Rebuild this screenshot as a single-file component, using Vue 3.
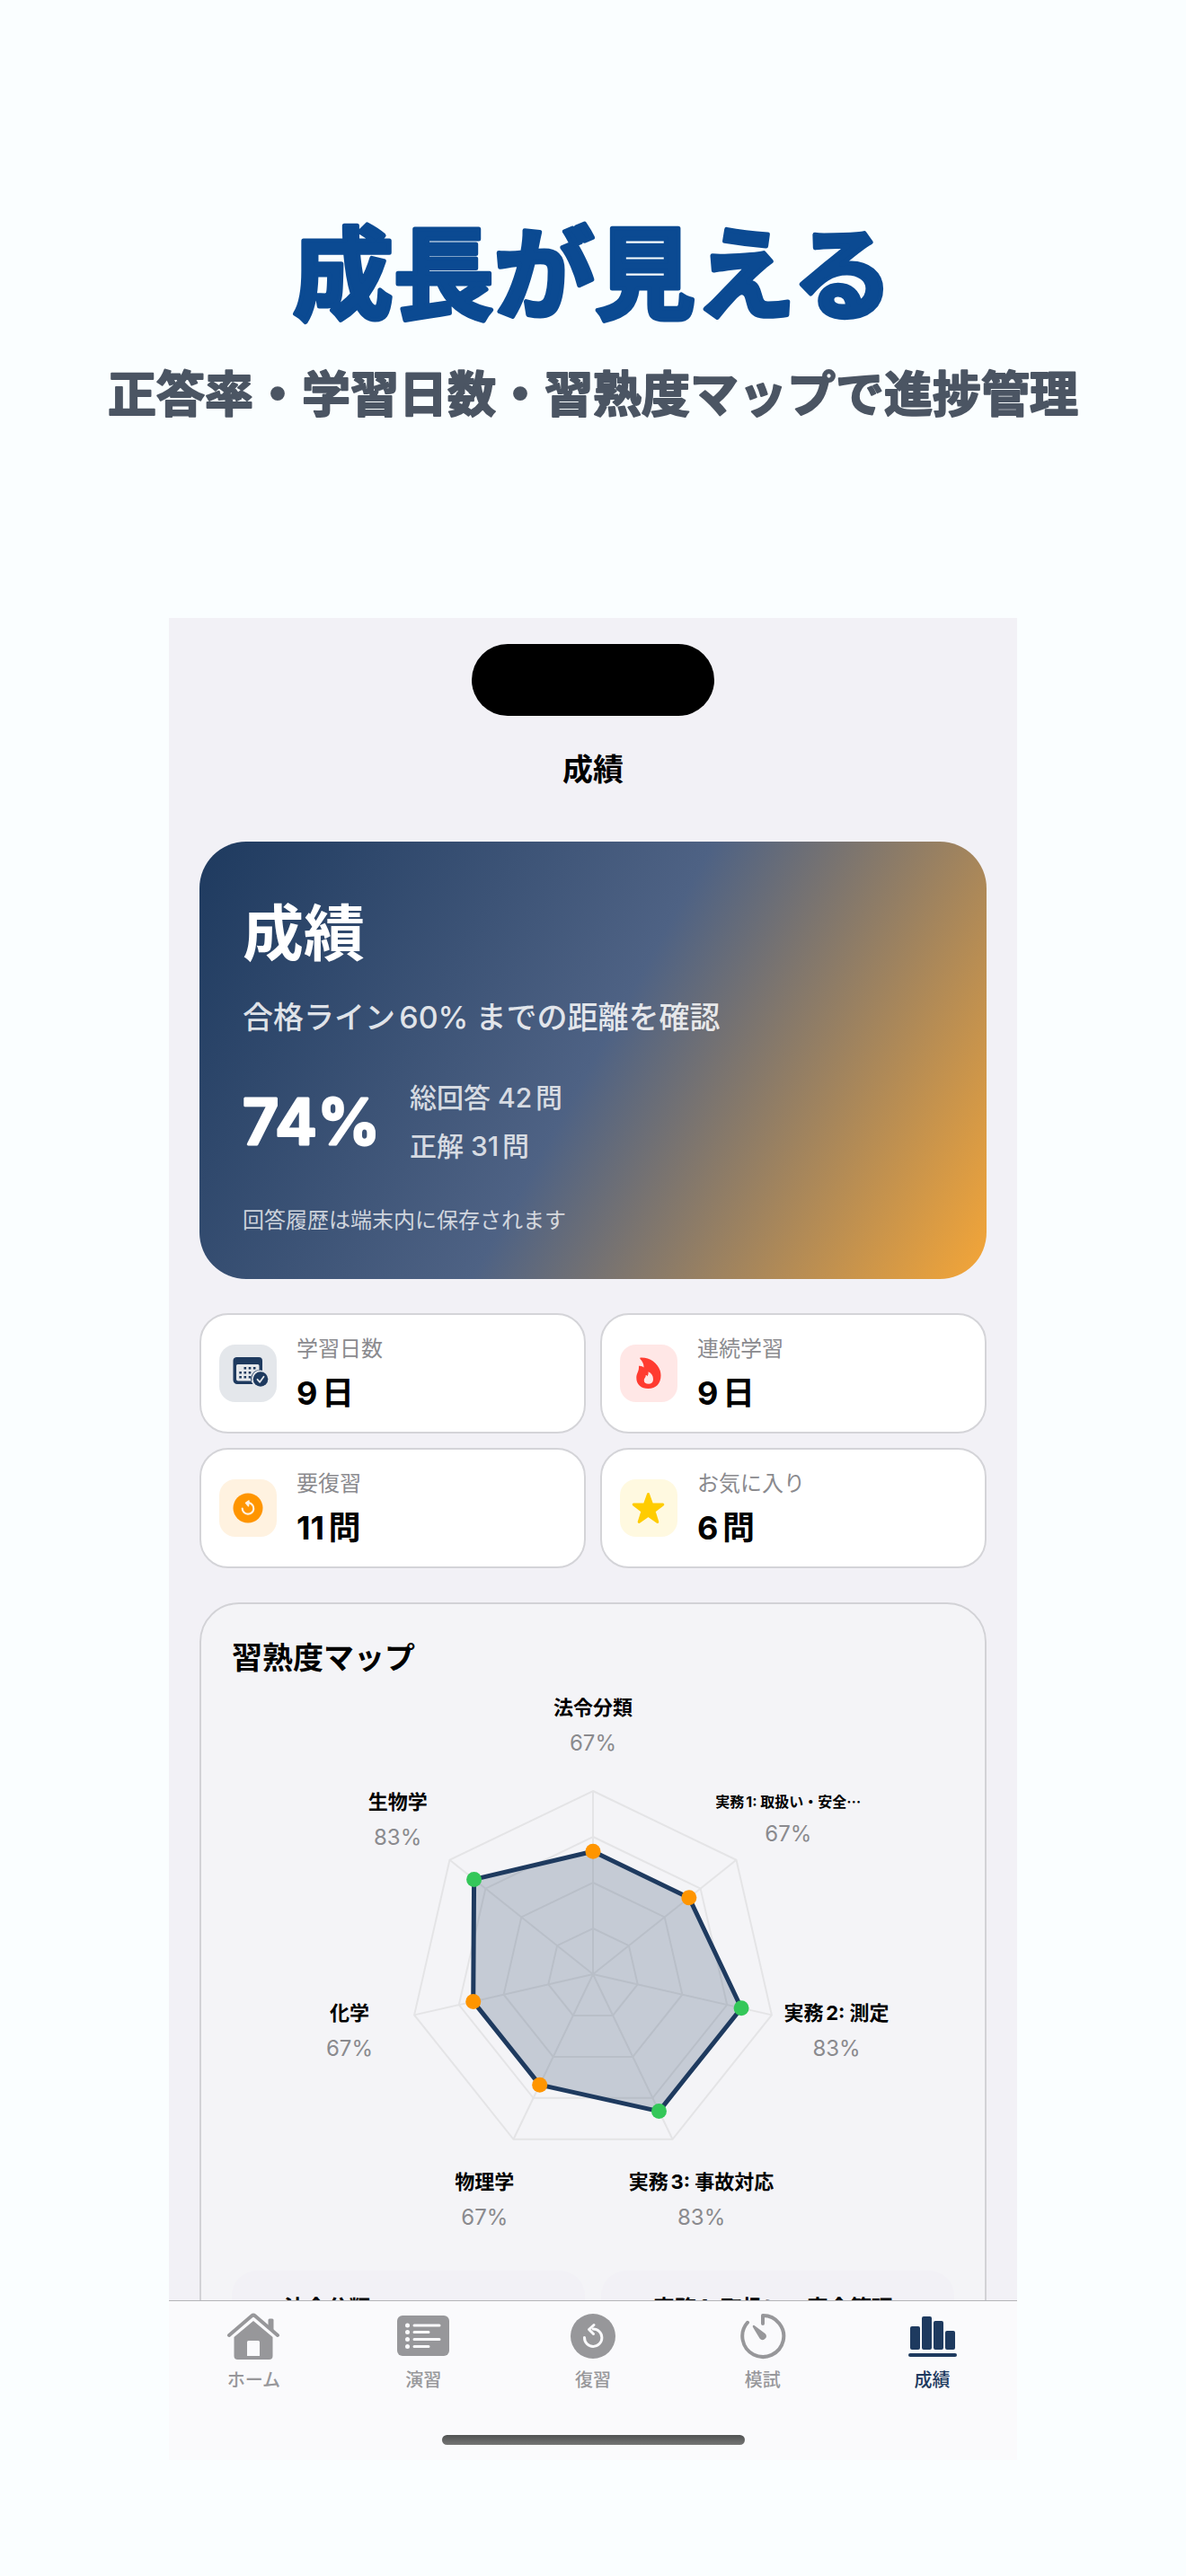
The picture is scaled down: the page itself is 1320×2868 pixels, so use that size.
<script setup>
const CENTER = { x: 402, y: 318 }
const RADIUS = 204
const LABEL_RADIUS = 278

const subjects = [
  { name: '法令分類', value: 67 },
  { name: '実務1: 取扱い・安全⋯', value: 67, small: true },
  { name: '実務2: 測定', value: 83 },
  { name: '実務3: 事故対応', value: 83 },
  { name: '物理学', value: 67 },
  { name: '化学', value: 67 },
  { name: '生物学', value: 83 },
]

const at = (index, radius) => {
  const angle = (index / subjects.length) * Math.PI * 2
  return {
    x: CENTER.x + radius * Math.sin(angle),
    y: CENTER.y - radius * Math.cos(angle),
  }
}
const polygon = (radii) =>
  radii.map((r, i) => at(i, r)).map((p) => `${p.x.toFixed(1)},${p.y.toFixed(1)}`).join(' ')

const rings = [0.25, 0.5, 0.75, 1].map((f) => polygon(subjects.map(() => RADIUS * f)))
const area = polygon(subjects.map((s) => (RADIUS * s.value) / 100))
const axes = subjects.map((s, i) => ({
  ...s,
  end: at(i, RADIUS),
  dot: at(i, (RADIUS * s.value) / 100),
  label: at(i, LABEL_RADIUS),
}))

const stats = [
  { icon: 'calendar', label: '学習日数', value: '9日' },
  { icon: 'flame', label: '連続学習', value: '9日' },
  { icon: 'review', label: '要復習', value: '11問' },
  { icon: 'star', label: 'お気に入り', value: '6問' },
]

const tabs = [
  { icon: 'home', label: 'ホーム' },
  { icon: 'list', label: '演習' },
  { icon: 'review', label: '復習' },
  { icon: 'timer', label: '模試' },
  { icon: 'chart', label: '成績', active: true },
]
</script>

<template>
  <main class="page">
    <header class="intro">
      <h1>
        <svg viewBox="0 0 1320 132"><text x="660" y="108">成長が見える</text></svg>
      </h1>
      <p>
        <svg viewBox="0 0 1320 64"><text x="660" y="52">正答率・学習日数・習熟度マップで進捗管理</text></svg>
      </p>
    </header>

    <section class="phone">
      <div class="content">
        <div class="island"></div>
        <h2 class="nav-title">成績</h2>

        <section class="hero">
          <h3>成績</h3>
          <p class="goal">合格ライン<span class="line">60%</span>までの距離を確認</p>
          <div class="score">
            <strong>
              <svg viewBox="0 0 150 90"><text x="0" y="70">74%</text></svg>
            </strong>
            <div class="counts">
              <p>総回答 42問</p>
              <p>正解 31問</p>
            </div>
          </div>
          <p class="note">回答履歴は端末内に保存されます</p>
        </section>

        <div class="stats">
          <article v-for="s in stats" :key="s.label" class="stat">
            <span class="tile" :class="s.icon">
              <svg v-if="s.icon === 'calendar'" viewBox="0 0 64 64">
                <path fill-rule="evenodd" fill="currentColor" d="M19 14h25a4 4 0 0 1 4 4v11a9.500 9.500 0 0 0-10.500 15H20a4.500 4.500 0 0 1-4.500-4.500V18a4 4 0 0 1 3.500-4zM20.500 22a1.500 1.500 0 0 0-1.500 1.500V38.500a2 2 0 0 0 2 2H36.500A9.500 9.500 0 0 1 44.500 28.500V23.500a1.500 1.500 0 0 0-1.500-1.500z" />
                <path stroke="currentColor" stroke-width="2.600" stroke-dasharray="2.600 2.600" d="M27.500 26.300h14M22.300 31.300h14M22.300 36.300h13" />
                <circle cx="46" cy="38.500" r="8.300" fill="currentColor" />
                <path d="M42.500 38.800l2.700 3 4.300-6" fill="none" stroke="#e4e7eb" stroke-width="1.800" stroke-linecap="round" stroke-linejoin="round" />
              </svg>
              <svg v-else-if="s.icon === 'flame'" viewBox="0 0 64 64">
                <path fill="currentColor" fill-rule="evenodd" d="M22.500 14.500C34 13.500 45.500 22.500 45.500 34.500C45.500 43.500 40 49 31.500 49C23.500 49 18.300 44.500 18.300 37C18.300 31.500 21.500 30 21 23.800C22.800 23.300 25 24 26.500 25.500C26.800 22 25 18.500 22.300 15.800zM31.500 30.200C32 33 30.800 35 30.200 35.300C30 34.300 29.700 34 28.700 34C29 37 26.800 37 26.800 40C26.800 42.500 28.800 43.800 31.800 43.800C35 43.800 37 42 37 38.800C37 34.500 35 31.500 31.500 30.200z" />
              </svg>
              <svg v-else-if="s.icon === 'review'" viewBox="0 0 64 64">
                <circle cx="32" cy="32" r="16.500" fill="currentColor" />
                <g fill="none" stroke="#fff2e0" stroke-width="2.200" stroke-linecap="round" stroke-linejoin="round">
                  <path d="M25.700 32.500A6.300 6.300 0 1 0 33 26.200" />
                  <path d="M33 24l-3.500 2.300 3 3.500z" fill="#fff2e0" stroke-width="1.500" />
                </g>
              </svg>
              <svg v-else viewBox="0 0 64 64">
                <path fill="currentColor" stroke="currentColor" stroke-width="3" stroke-linejoin="round" d="M31.500 16.500l4 11.300 12.300.2-9.800 7.500 3.800 12-10.300-7.200-10.300 7.200 3.800-12-9.800-7.500 12.300-.2z" />
              </svg>
            </span>
            <div class="stat-text">
              <p class="stat-label">{{ s.label }}</p>
              <p class="stat-value">{{ s.value }}</p>
            </div>
          </article>
        </div>

        <section class="map">
          <h3>習熟度マップ</h3>
          <svg class="radar" viewBox="0 0 804 620" role="img" aria-label="習熟度マップ">
            <g class="grid">
              <polygon v-for="r in rings" :key="r" :points="r" />
              <line v-for="a in axes" :key="a.name" :x1="CENTER.x" :y1="CENTER.y" :x2="a.end.x" :y2="a.end.y" />
            </g>
            <polygon class="area" :points="area" />
            <circle
              v-for="a in axes"
              :key="a.name"
              :cx="a.dot.x"
              :cy="a.dot.y"
              r="8.500"
              :class="a.value >= 80 ? 'good' : 'fair'"
            />
            <g v-for="a in axes" :key="a.name" text-anchor="middle">
              <text class="name" :class="{ small: a.small }" :x="a.label.x" :y="a.label.y - (a.small ? 13 : 11)">{{ a.name }}</text>
              <text class="percent" :x="a.label.x" :y="a.label.y + (a.small ? 25 : 29)">{{ a.value }}%</text>
            </g>
          </svg>
          <div class="breakdown">
            <p>法令分類</p>
            <p>実務1: 取扱い・安全管理</p>
          </div>
        </section>
      </div>

      <nav class="tabbar">
        <div class="tabs">
          <a v-for="t in tabs" :key="t.label" href="#" :class="{ active: t.active }">
            <svg v-if="t.icon === 'home'" viewBox="0 0 60 56">
              <path fill="none" stroke="currentColor" stroke-width="4" stroke-linecap="round" stroke-linejoin="round" d="M3 28L28 6.500q2-1.700 4 0L57 28" />
              <path fill="currentColor" d="M46.500 20V11q0-1.500 1.500-1.500h3q1.500 0 1.500 1.500v14z" />
              <path fill="currentColor" fill-rule="evenodd" d="M8.500 30L30 12l21.500 18v21q0 4-4 4h-35q-4 0-4-4zM24.500 34q-1.500 0-1.500 1.500V51h14V35.500q0-1.500-1.500-1.500z" />
            </svg>
            <svg v-else-if="t.icon === 'list'" viewBox="0 0 60 56">
              <rect x="1" y="6" width="58" height="45" rx="6" fill="currentColor" />
              <g stroke="#fafafc" stroke-width="3" stroke-linecap="round">
                <path d="M20 17h28M20 24.500h16M20 32.500h28M20 40.500h16" />
                <path stroke-width="5" d="M12.500 17h.01M12.500 24.500h.01M12.500 32.500h.01M12.500 40.500h.01" />
              </g>
            </svg>
            <svg v-else-if="t.icon === 'review'" viewBox="0 0 60 56">
              <circle cx="30" cy="29" r="25" fill="currentColor" />
              <g fill="none" stroke="#fafafc" stroke-width="3" stroke-linecap="round" stroke-linejoin="round">
                <path d="M20.500 30.500A9.700 9.700 0 1 0 30 21" />
                <path d="M31 16.500l-5.500 5 5 5" />
              </g>
            </svg>
            <svg v-else-if="t.icon === 'timer'" viewBox="0 0 60 56">
              <path fill="none" stroke="currentColor" stroke-width="4" stroke-linecap="round" stroke-linejoin="round" d="M30 15V6a23 23 0 1 1-17 7.800" />
              <path fill="currentColor" d="M19 17.300q-.6.700 0 1.600l7.500 12.600a4 4 0 1 0 6.300-5.300L20.500 17q-1-.6-1.500.3z" />
            </svg>
            <svg v-else viewBox="0 0 60 56">
              <path fill="none" stroke="currentColor" stroke-width="4" stroke-linecap="round" d="M5 50h50" />
              <g fill="currentColor">
                <rect x="5" y="18" width="11" height="26" rx="2" />
                <rect x="18" y="7" width="11" height="37" rx="2" />
                <rect x="31" y="12" width="11" height="32" rx="2" />
                <rect x="44" y="23" width="11" height="21" rx="2" />
              </g>
            </svg>
            <span>{{ t.label }}</span>
          </a>
        </div>
        <div class="home-indicator"></div>
      </nav>
    </section>
  </main>
</template>

<style>
body {
  background: #fafeff;
}
</style>

<style scoped>
* {
  box-sizing: border-box;
}
h1,
h2,
h3,
p {
  margin: 0;
}
.page {
  min-height: 100vh;
  padding: 239px 0 129px;
  background: #fafeff;
  font-family: Inter, "Noto Sans CJK JP", sans-serif;
  text-autospace: normal;
}
.intro {
  display: flex;
  flex-direction: column;
  gap: 36px;
  font-family: "Noto Sans CJK JP", sans-serif;
}
.intro svg,
.score svg {
  display: block;
  width: 100%;
  overflow: visible;
}
/* Round joins soften the glyph corners into a rounded display face. */
.intro text {
  text-anchor: middle;
  stroke-linejoin: round;
}
.intro h1 text {
  fill: #0b4a92;
  stroke: #0b4a92;
  stroke-width: 5px;
  font-size: 112px;
  font-weight: 700;
}
.intro p text {
  fill: #4b5563;
  stroke: #4b5563;
  stroke-width: 2px;
  font-size: 54px;
  font-weight: 700;
}
.phone {
  display: flex;
  flex-direction: column;
  margin: 217px 188px 0;
  aspect-ratio: 944 / 2051;
  background: #f2f1f6;
}
.content {
  flex: 1;
  min-height: 0;
  overflow: hidden;
  padding: 29px 34px 0;
}
.island {
  width: 270px;
  height: 80px;
  margin: 0 auto;
  border-radius: 40px;
  background: #000;
}
.nav-title {
  margin-top: 38px;
  color: #000;
  font-size: 34px;
  font-weight: 600;
  line-height: 44px;
  text-align: center;
}
.hero {
  margin-top: 58px;
  padding: 60px 48px 49px;
  border-radius: 52px;
  background: linear-gradient(119deg, #1e3a5f, #4e6284 50%, #f5a637);
  color: #fff;
}
.hero h3 {
  font-size: 68px;
  font-weight: 700;
  line-height: 84px;
}
.goal {
  margin-top: 30px;
  color: rgba(255, 255, 255, 0.85);
  font-size: 34px;
  font-weight: 500;
  line-height: 44px;
}
.line {
  margin-right: 8px;
}
.score {
  display: flex;
  align-items: center;
  gap: 36px;
  margin-top: 40px;
}
.score strong {
  width: 150px;
}
.score text {
  fill: #fff;
  stroke: #fff;
  stroke-width: 3px;
  stroke-linejoin: round;
  font-size: 70px;
  font-weight: 600;
}
.counts {
  color: rgba(255, 255, 255, 0.8);
  font-size: 30px;
  font-weight: 500;
  line-height: 54px;
}
.note {
  margin-top: 40px;
  color: rgba(255, 255, 255, 0.75);
  font-size: 24px;
  line-height: 32px;
}
.stats {
  display: grid;
  grid-template-columns: 1fr 1fr;
  gap: 16px;
  margin-top: 38px;
}
.stat {
  display: flex;
  align-items: center;
  gap: 22px;
  height: 134px;
  padding: 0 20px;
  border: 2px solid #d4d4d8;
  border-radius: 32px;
  background: #fff;
}
.tile {
  width: 64px;
  height: 64px;
  border-radius: 18px;
}
.tile svg {
  display: block;
  width: 100%;
}
.tile.calendar {
  background: #e4e7eb;
  color: #1e3a5f;
}
.tile.flame {
  background: #ffe7e6;
  color: #ff3b30;
}
.tile.review {
  background: #fff2e0;
  color: #ff9500;
}
.tile.star {
  background: #fff9e0;
  color: #ffcc00;
}
.stat-text {
  display: flex;
  flex-direction: column;
  gap: 8px;
  padding-top: 4px;
}
.stat-label {
  color: #8a8a8e;
  font-size: 24px;
  font-weight: 400;
  line-height: 32px;
}
.stat-value {
  color: #000;
  font-size: 36px;
  font-weight: 700;
  line-height: 50px;
}
.map {
  margin-top: 38px;
  padding: 38px 34px;
  border: 2px solid #d2d2d6;
  border-radius: 44px;
  background: #f4f4f7;
}
.map h3 {
  font-size: 34px;
  font-weight: 700;
  line-height: 44px;
}
.radar {
  display: block;
  width: 100%;
  margin: 12px 0 28px;
}
.grid {
  fill: none;
  stroke: #e4e4e6;
  stroke-width: 2;
}
.area {
  fill: rgba(30, 58, 95, 0.22);
  stroke: #1e3a5f;
  stroke-width: 5;
  stroke-linejoin: round;
}
.good {
  fill: #34c759;
}
.fair {
  fill: #ff9500;
}
.name {
  fill: #000;
  font-size: 22px;
  font-weight: 700;
}
.name.small {
  font-size: 16px;
}
.percent {
  fill: #8a8a8e;
  font-size: 24px;
}
.breakdown {
  display: grid;
  grid-template-columns: 1fr 1fr;
  gap: 18px;
}
.breakdown p {
  padding: 26px 20px 40px 58px;
  border-radius: 28px;
  background: #f2f1f6;
  font-size: 24px;
  font-weight: 700;
  line-height: 32px;
  white-space: nowrap;
}
.tabbar {
  display: flex;
  flex-direction: column;
  justify-content: space-between;
  align-items: center;
  height: 178px;
  padding-bottom: 17px;
  border-top: 1px solid #b4b4b8;
  background: #fafafc;
}
.tabs {
  display: flex;
  align-self: stretch;
}
.tabs a {
  display: flex;
  flex: 1;
  flex-direction: column;
  align-items: center;
  gap: 8px;
  padding-top: 10px;
  color: #97979a;
  font-size: 20px;
  font-weight: 500;
  line-height: 28px;
  text-decoration: none;
}
.tabs a.active {
  color: #1e3a5f;
}
.tabs svg {
  width: 60px;
  height: 56px;
}
.home-indicator {
  width: 337px;
  height: 11px;
  border-radius: 6px;
  background: linear-gradient(#505252, #757575);
}
</style>
